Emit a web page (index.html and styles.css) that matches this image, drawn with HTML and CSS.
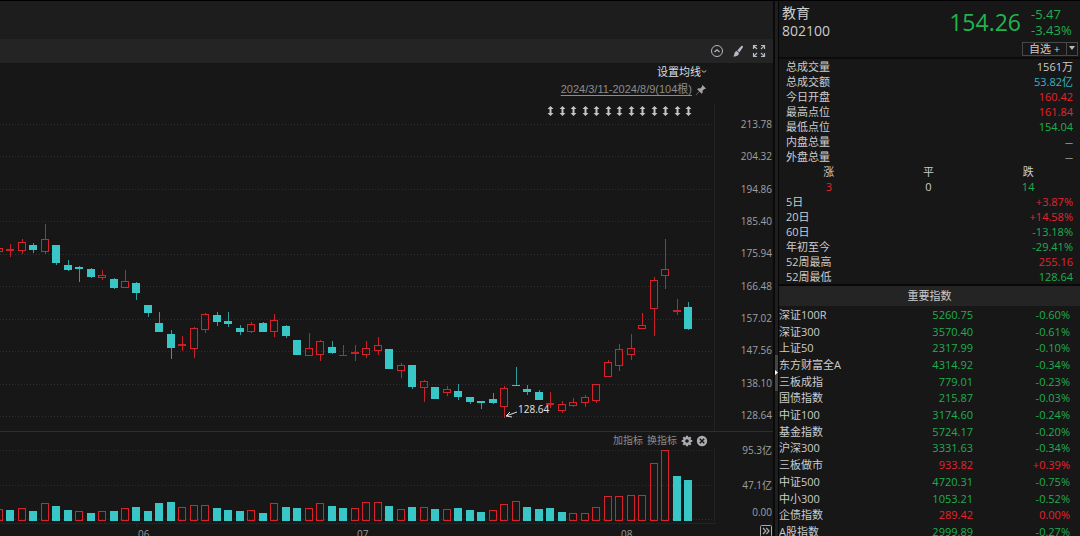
FILE: index.html
```html
<!DOCTYPE html>
<html lang="zh-CN">
<head>
<meta charset="utf-8">
<title>教育 802100</title>
<link rel="stylesheet" href="styles.css">
</head>
<body>
<div class="app">
  <main class="chart">
    <div class="topbar"></div>
    <div class="toolbar">
      <button class="icon-btn" type="button" aria-label="收起">
        <svg width="14" height="14" viewBox="0 0 14 14"><circle cx="7" cy="7" r="5.5" fill="none" stroke="#b4b8c2"/><path d="M4.5 8 7 5.7 9.5 8" fill="none" stroke="#b4b8c2" stroke-width="1.2"/></svg>
      </button>
      <button class="icon-btn" type="button" aria-label="画线">
        <svg width="14" height="14" viewBox="0 0 14 14"><path d="M11.400 1.800c.9.600.7 1.300.2 2L8.500 8.200 6.200 6.500 9.800 2.400c.5-.5 1-.9 1.600-.6z" fill="#b4bac8"/><path d="M5.600 7 7.900 8.800c0 2.200-1.300 3.700-5.600 3.700 1.300-1 .8-5 3.300-5.500z" fill="#b4bac8"/></svg>
      </button>
      <button class="icon-btn" type="button" aria-label="全屏">
        <svg width="14" height="14" viewBox="0 0 14 14"><path d="M1.500 5V1.500H5M1.500 1.500 5 5M9 1.500h3.500V5M12.500 1.500 9 5M1.500 9v3.500H5M1.500 12.500 5 9M9 12.500h3.500V9M12.500 12.500 9 9" fill="none" stroke="#b4bac8" stroke-width="1.200"/></svg>
      </button>
    </div>

    <section class="pane price-pane">
      <div class="plot">
        <div class="plot-head">
          <button class="ma-btn" type="button">设置均线
            <svg width="6" height="5" viewBox="0 0 6 5"><path d="M.7 1.500 3 3.300 5.300 1.500" fill="none" stroke="#bbb"/></svg>
          </button>
          <div class="range">
            <a href="#">2024/3/11-2024/8/9(104根)</a>
            <svg width="12" height="12" viewBox="0 0 12 12"><path d="M7.500 1 11 4.500l-1 .6-.7-.2L7.500 6.700l.1 2-1 1L4.500 7.600 1 11.200l-.3-.3L4.200 7.300 2.200 5.200l1-.9 2.100.1L7.200 2.600 6.900 1.800z" fill="#a5a5a5"/></svg>
          </div>
        </div>
        <svg class="price-svg" id="price" role="img" aria-label="K线图"></svg>
      </div>
      <div class="axis price-axis">
        <span>213.78</span><span>204.32</span><span>194.86</span><span>185.40</span><span>175.94</span><span>166.48</span><span>157.02</span><span>147.56</span><span>138.10</span><span>128.64</span>
      </div>
    </section>

    <section class="pane volume-pane">
      <div class="plot">
        <div class="volume-head">
          <button class="text-btn" type="button">加指标</button>
          <button class="text-btn" type="button">换指标</button>
          <button class="icon-btn" type="button" aria-label="设置">
            <svg width="12" height="12" viewBox="0 0 12 12"><g stroke="#a9abb0" stroke-width="2.200"><path d="M6 .7v10.600M.7 6h10.600M2.300 2.300l7.400 7.400M9.700 2.300 2.300 9.700"/></g><circle cx="6" cy="6" r="3.900" fill="#a9abb0"/><circle cx="6" cy="6" r="1.800" fill="#171717"/></svg>
          </button>
          <button class="icon-btn" type="button" aria-label="关闭">
            <svg width="12" height="12" viewBox="0 0 12 12"><circle cx="6" cy="6" r="5.200" fill="#a9abb0"/><path d="m3.800 3.800 4.400 4.400M8.200 3.800 3.800 8.200" stroke="#171717" stroke-width="1.500"/></svg>
          </button>
        </div>
        <svg class="volume-svg" id="volume" role="img" aria-label="成交量"></svg>
      </div>
      <div class="axis volume-axis"><span>95.3亿</span><span>47.1亿</span><span>0.00</span></div>
    </section>

    <footer class="timeline">
      <svg class="time-svg" id="months"></svg>
      <button class="more-btn" type="button" aria-label="更多">
        <svg width="12" height="12" viewBox="0 0 12 12"><rect x=".5" y=".5" width="11" height="11" rx="1" fill="none" stroke="#aaa"/><path d="m3 3 2.800 3L3 9M6.300 3l2.800 3-2.800 3" fill="none" stroke="#aaa" stroke-width="1.200"/></svg>
      </button>
    </footer>
  </main>

  <div class="divider">
    <button class="grip" type="button" aria-label="收起侧栏"><svg width="3" height="5" viewBox="0 0 3 5"><path d="M0 0 3 2.500 0 5z" fill="#fff"/></svg></button>
  </div>

  <aside class="side">
    <header class="quote">
      <div class="name">教育<br>802100</div>
      <div class="last">154.26</div>
      <div class="change">-5.47<br>-3.43%</div>
      <div class="watch">
        <button class="watch-add" type="button">自选 +</button><button class="watch-menu" type="button" aria-label="分组"><svg width="8" height="5" viewBox="0 0 8 5"><path d="M1 0h6L4 4z" fill="#bbb"/></svg></button>
      </div>
    </header>
    <dl class="stats">
      <div><dt>总成交量</dt><dd>1561万</dd></div>
      <div><dt>总成交额</dt><dd class="cyan">53.82亿</dd></div>
      <div><dt>今日开盘</dt><dd class="up">160.42</dd></div>
      <div><dt>最高点位</dt><dd class="up">161.84</dd></div>
      <div><dt>最低点位</dt><dd class="down">154.04</dd></div>
      <div><dt>内盘总量</dt><dd class="none">—</dd></div>
      <div><dt>外盘总量</dt><dd class="none">—</dd></div>
    </dl>
    <dl class="breadth">
      <div><dt>涨</dt><dd class="up">3</dd></div>
      <div><dt>平</dt><dd>0</dd></div>
      <div><dt>跌</dt><dd class="down">14</dd></div>
    </dl>
    <dl class="stats">
      <div><dt>5日</dt><dd class="up">+3.87%</dd></div>
      <div><dt>20日</dt><dd class="up">+14.58%</dd></div>
      <div><dt>60日</dt><dd class="down">-13.18%</dd></div>
      <div><dt>年初至今</dt><dd class="down">-29.41%</dd></div>
      <div><dt>52周最高</dt><dd class="up">255.16</dd></div>
      <div><dt>52周最低</dt><dd class="down">128.64</dd></div>
    </dl>
    <h2 class="title">重要指数</h2>
    <table class="indices">
      <tbody>
        <tr class="down"><th scope="row">深证100R</th><td>5260.75</td><td>-0.60%</td></tr>
        <tr class="down"><th scope="row">深证300</th><td>3570.40</td><td>-0.61%</td></tr>
        <tr class="down"><th scope="row">上证50</th><td>2317.99</td><td>-0.10%</td></tr>
        <tr class="down"><th scope="row">东方财富全A</th><td>4314.92</td><td>-0.34%</td></tr>
        <tr class="down"><th scope="row">三板成指</th><td>779.01</td><td>-0.23%</td></tr>
        <tr class="down"><th scope="row">国债指数</th><td>215.87</td><td>-0.03%</td></tr>
        <tr class="down"><th scope="row">中证100</th><td>3174.60</td><td>-0.24%</td></tr>
        <tr class="down"><th scope="row">基金指数</th><td>5724.17</td><td>-0.20%</td></tr>
        <tr class="down"><th scope="row">沪深300</th><td>3331.63</td><td>-0.34%</td></tr>
        <tr class="up"><th scope="row">三板做市</th><td>933.82</td><td>+0.39%</td></tr>
        <tr class="down"><th scope="row">中证500</th><td>4720.31</td><td>-0.75%</td></tr>
        <tr class="down"><th scope="row">中小300</th><td>1053.21</td><td>-0.52%</td></tr>
        <tr class="up"><th scope="row">企债指数</th><td>289.42</td><td>0.00%</td></tr>
        <tr class="down"><th scope="row">A股指数</th><td>2999.89</td><td>-0.27%</td></tr>
      </tbody>
    </table>
  </aside>
</div>
<script src="chart.js"></script>
</body>
</html>
```

FILE: styles.css
```css
* { box-sizing: border-box; }
body {
  margin: 0;
  background: #171717;
  color: #ccc;
  font: 11px/15px "Open Sans", "Noto Sans CJK SC", sans-serif;
  overflow: hidden;
}
button {
  margin: 0;
  padding: 0;
  border: 0;
  background: none;
  color: inherit;
  font: inherit;
}
svg { display: block; }
dl, dd { margin: 0; }
.up { color: #e3252e; }
.down { color: #1fae4f; }
.cyan { color: #36b4be; }

.app {
  display: flex;
  height: 100vh;
  border-top: 1px solid #000;
}
.chart {
  flex: 1;
  min-width: 0;
  display: flex;
  flex-direction: column;
}
.topbar { flex: none; height: 38px; background: #1d1d1d; }
.toolbar {
  flex: none;
  height: 24px;
  padding-right: 7px;
  display: flex;
  align-items: center;
  justify-content: flex-end;
  gap: 7px;
  background: #242424;
}
.pane { flex: none; display: flex; }
.plot { flex: 1; min-width: 0; }
.price-pane { border-bottom: 1px solid #2b3037; }
.plot-head {
  height: 41px;
  display: flex;
  flex-direction: column;
  align-items: flex-end;
  gap: 2px;
  padding-right: 9px;
}
.ma-btn {
  display: flex;
  align-items: center;
  height: 17px;
  color: #ddd;
}
.range {
  display: flex;
  align-items: center;
  gap: 3px;
  font-family: "Liberation Sans", "Noto Sans CJK SC", sans-serif;
}
.range a { color: #8c8c8c; text-underline-offset: 2px; }
.price-svg { width: 100%; height: 327px; }
.axis {
  flex: none;
  width: 57px;
  padding-right: 1px;
  display: flex;
  flex-direction: column;
  text-align: right;
  font-size: 10px;
  line-height: 16px;
  color: #a0a0a0;
}
.price-axis {
  justify-content: space-between;
  padding-top: 53px;
  padding-bottom: 8px;
}
.volume-head {
  height: 17px;
  padding-right: 8px;
  display: flex;
  align-items: center;
  justify-content: flex-end;
  gap: 3px;
}
.text-btn { margin-right: 1px; font-size: 10px; color: #8c8c8c; }
.volume-svg { width: 100%; height: 74px; }
.volume-axis { padding-top: 10px; }
.volume-axis span + span { padding-top: 19px; }
.volume-axis span:last-child { padding-top: 11px; }
.timeline {
  flex: none;
  display: flex;
  height: 16px;
}
.time-svg { flex: 1; min-width: 0; height: 16px; }
.more-btn { width: 57px; padding: 2px 1px 0 0; display: flex; justify-content: flex-end; }
.grid { stroke: #303032; stroke-dasharray: 1 2; }
.edge { stroke: #232325; }
.bar-up { fill: none; stroke: #d8222b; }
.wick-up { fill: #c8212a; }
.bar-down { fill: #38c6c6; }
.wick-down { fill: #2f9c9d; }
.mark { fill: #c4c4c4; }
.low-text { fill: #e4e4e4; font-size: 10px; }
.low-arrow { fill: none; stroke: #ddd; }
.month { fill: #999; font-size: 10px; }

.divider {
  flex: none;
  width: 6px;
  display: flex;
  flex-direction: column;
  justify-content: center;
  padding-top: 208px;
  background: #1f1f1f;
  border-left: 2px solid #0a0a0a;
  border-right: 1px solid #050505;
}
.grip { height: 36px; background: #444; display: flex; align-items: center; }

.side { flex: none; width: 301px; overflow: hidden; }
.quote {
  height: 58px;
  padding: 3px 2px 0 3px;
  display: grid;
  grid-template-columns: 1fr auto 47px;
  column-gap: 10px;
  border-bottom: 2px solid #0b0b0b;
}
.name { font-size: 14px; line-height: 18px; }
.last { font-size: 23px; line-height: 36px; color: #1fb450; }
.change { font-size: 13px; line-height: 16px; padding-top: 2px; color: #1fae4f; }
.watch {
  grid-column: 1 / -1;
  justify-self: end;
  display: flex;
  height: 14px;
  border: 1px solid #484848;
}
.watch-add { width: 43px; line-height: 12px; }
.watch-menu {
  width: 11px;
  border-left: 1px solid #484848;
  display: flex;
  align-items: center;
  justify-content: center;
}
.stats { padding: 0 7px; }
.stats div { display: flex; justify-content: space-between; }
.stats .none { font-size: 8px; }
.breadth {
  display: grid;
  grid-template-columns: repeat(3, 1fr);
  padding-right: 2px;
  text-align: center;
}
.title {
  margin: 0;
  height: 22px;
  border-top: 2px solid #080808;
  background: #242424;
  font-size: 11px;
  font-weight: 400;
  line-height: 20px;
  text-align: center;
}
.indices {
  width: 100%;
  height: 234px;
  border-collapse: collapse;
  table-layout: fixed;
}
.indices th, .indices td { padding: 0; line-height: 15px; text-align: right; }
.indices th { width: 110px; text-align: left; font-weight: 400; color: #ccc; }
.indices td:nth-child(2) { width: 84px; }
.indices td:last-child { padding-right: 10px; }
```

FILE: chart.js
```js
// Each candle: direction, body top, body bottom, wick top, wick bottom
const candles = [
  ['u',248,252,248,252],['u',249,251,244,257],['u',242,251,239,254],['d',245,250,243,253],['u',239,252,224,254],
  ['d',245,263,245,265],['d',265,270,260,271],['d',267,269,266,282],['d',269,277,268,278],['u',275,278,270,280],
  ['d',279,288,278,289],['u',281,288,270,288],['d',283,293,282,300],['d',305,313,305,317],['d',323,332,312,332],
  ['d',334,348,330,359],['u',344,346,336,351],['u',328,349,327,358],['u',314,330,313,333],['d',315,322,312,326],
  ['d',321,324,312,327],['d',328,332,325,335],['u',324,332,322,333],['d',323,332,322,332],['u',320,332,314,337],
  ['d',326,336,325,338],['d',340,355,340,355],['u',348,356,333,356],['u',341,355,340,361],['d',347,353,341,354],
  ['u',355,356,345,356],['u',352,354,345,361],['u',348,355,341,358],['u',345,351,337,355],['d',349,369,349,369],
  ['u',365,371,363,378],['d',365,387,365,389],['u',381,388,380,402],['d',387,399,387,399],['u',389,393,386,396],
  ['d',391,397,384,400],['d',397,402,397,404],['d',401,403,401,409],['d',399,403,393,404],['u',388,407,386,418],
  ['d',385,386,367,386],['d',389,392,385,395],['d',392,400,390,400],['u',403,405,392,408],['u',404,411,401,413],
  ['u',402,406,398,407],['u',397,403,395,407],['u',384,401,384,403],['u',362,377,360,377],['u',349,366,344,371],
  ['u',348,355,334,360],['u',325,329,313,329],['u',280,309,277,336],['u',269,276,239,289],['u',310,312,299,315],
  ['d',307,329,302,330]
];
// Top of each volume bar; 'u' hollow, 'd' solid
const volumes = ('u509 d510 u508 d511 u503 d506 d510 u511 d513 u511 d511 u508 d507 d511 d503 d502 u507 u505 u505 d508 ' +
  'd510 d511 u510 d513 u503 d507 d508 u508 u503 d506 d508 u508 u502 u502 d506 u509 d507 u507 d509 u509 d508 d510 d512 ' +
  'u510 u504 u501 d507 d509 d508 d512 u513 u513 u507 u496 u496 u495 u495 u463 u450 d476 d480').split(' ');
const STEP = 11.49;

function rect(cls, x, y, w, h) {
  return `<rect class="${cls}" x="${x}" y="${y}" width="${w}" height="${h}"/>`;
}
function bar(dir, x, top, bottom) {
  if (dir === 'd') return rect('bar-down', x - 4, top, 8, bottom - top);
  if (bottom - top < 3) return rect('wick-up', x - 4, top, 8, bottom - top);
  return rect('bar-up', x - 3.5, top + 0.5, 7, bottom - top - 1);
}
function grid(ys, width) {
  return ys.map(y => `<line class="grid" x1="0" x2="${width}" y1="${y + 0.5}" y2="${y + 0.5}"/>`).join('');
}
function draw() {
  const price = document.getElementById('price');
  const width = Math.round(price.getBoundingClientRect().width);
  const last = width - 28;
  const at = i => Math.round(last - (60 - i) * STEP);

  let p = grid([124, 156, 189, 221, 254, 286, 319, 351, 384, 416], width);
  p += `<line class="edge" x1="${width - 1.5}" x2="${width - 1.5}" y1="90" y2="431"/>`;
  for (let i = 48; i <= 60; i++) {
    const x = at(i) + 0.5;
    p += `<path class="mark" d="M${x} 106l3 3h-2v4h2l-3 3-3-3h2v-4h-2z"/>`;
  }
  candles.forEach(([dir, top, bottom, high, low], i) => {
    const x = at(i);
    const wick = dir === 'u' ? 'wick-up' : 'wick-down';
    if (high < top) p += rect(wick, x, high, 1, top - high);
    if (low > bottom) p += rect(wick, x, bottom, 1, low - bottom);
    p += bar(dir, x, top, bottom);
  });
  const ax = at(44);
  p += `<path class="low-arrow" d="M${ax + 13} 412 ${ax + 2} 416M${ax + 6} 412l-4 4 6 1"/>`;
  p += `<text class="low-text" x="${ax + 14}" y="413">128.64</text>`;
  price.innerHTML = `<g transform="translate(0 -104)">${p}</g>`;

  let v = grid([450, 485, 519], width);
  v += `<line class="edge" x1="${width - 1.5}" x2="${width - 1.5}" y1="449" y2="522"/>`;
  volumes.forEach((item, i) => { v += bar(item[0], at(i), Number(item.slice(1)), 521); });
  document.getElementById('volume').innerHTML = `<g transform="translate(0 -449)">${v}</g>`;

  let m = `<line class="edge" x1="0" x2="${width}" y1="0.5" y2="0.5"/>`;
  [['06', 580], ['07', 361], ['08', 97]].forEach(([label, offset]) => {
    const x = width - offset;
    m += `<line class="edge" x1="${x + 0.5}" x2="${x + 0.5}" y1="0" y2="4"/><text class="month" x="${x + 2}" y="15">${label}</text>`;
  });
  document.getElementById('months').innerHTML = m;
}
draw();
window.addEventListener('resize', draw);
```
